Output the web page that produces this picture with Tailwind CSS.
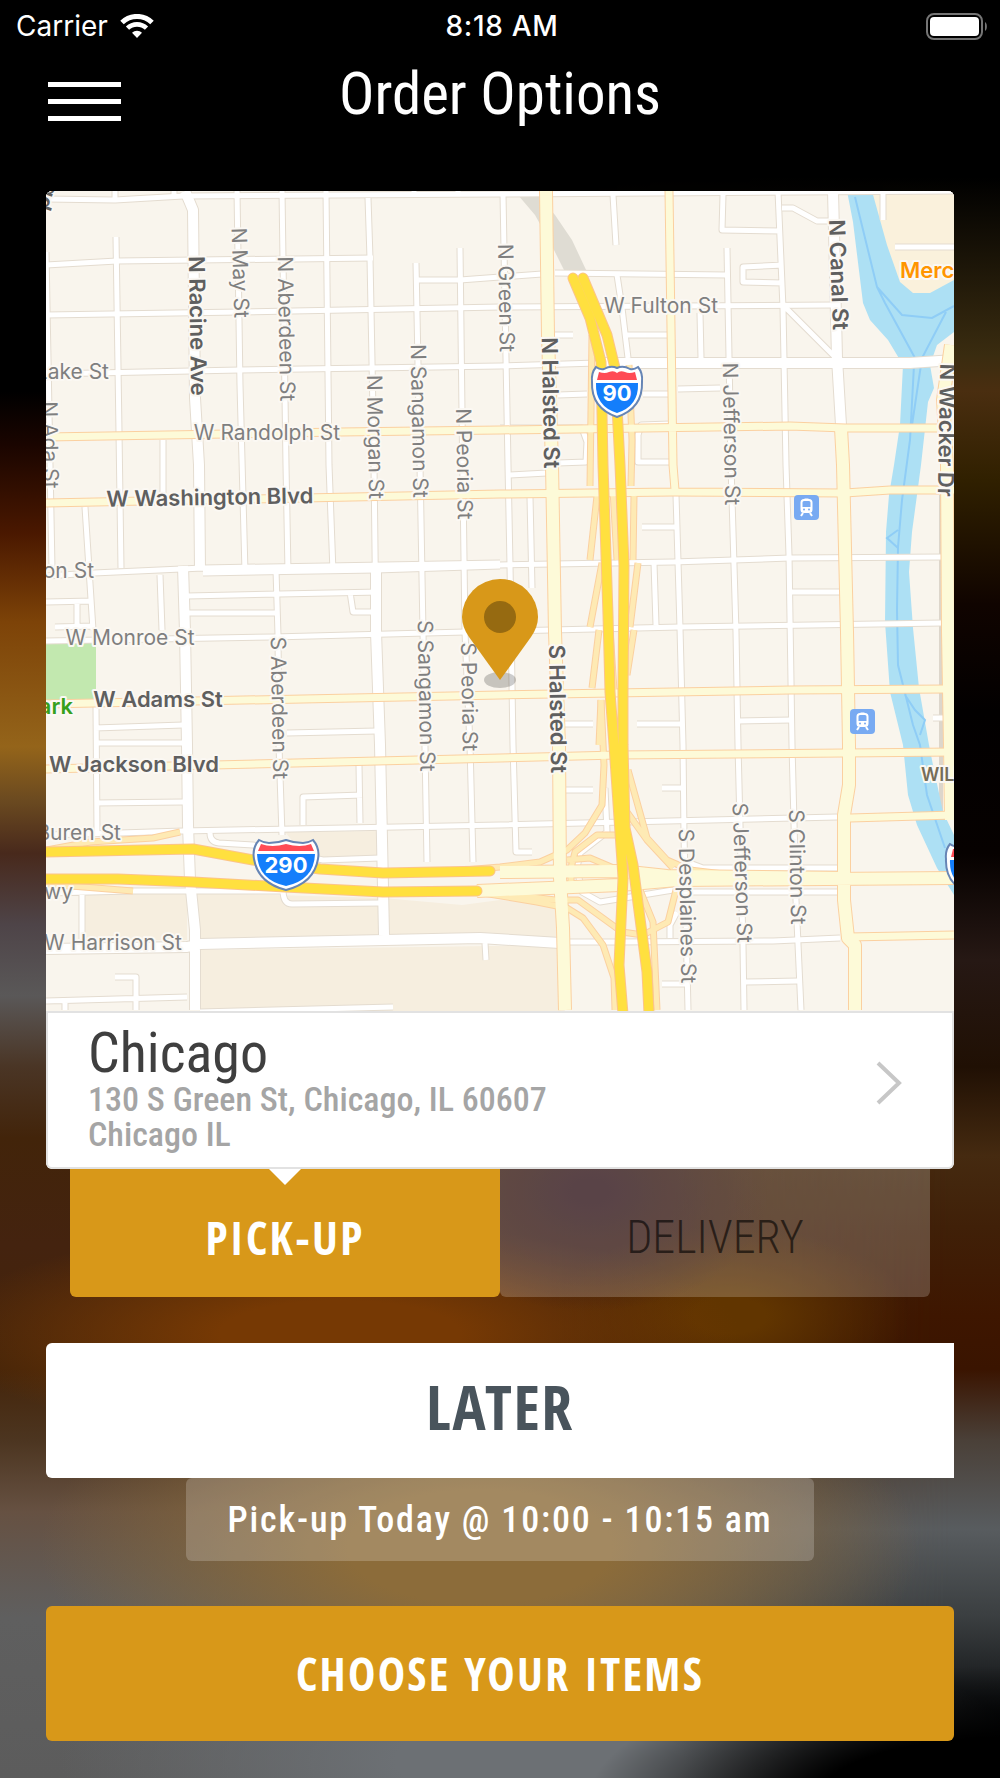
<!DOCTYPE html>
<html lang="en">
<head>
    <meta charset="UTF-8">
    <meta name="viewport" content="width=device-width, initial-scale=1.0">
    <script src="https://cdn.jsdelivr.net/npm/@tailwindcss/browser@4"></script>
    <title>Order Options</title>
</head>
<body class="bg-black">
<div class="relative isolate min-h-screen overflow-hidden font-['Roboto_Condensed','Roboto',sans-serif] text-white">

    <!-- Blurred backdrop -->
    <div class="absolute inset-0 -z-10 bg-[linear-gradient(to_bottom,#000_22%,#1a0500_25%,#4a1800_30%,#7d4308_35%,#94641a_42%,#6b4a20_45%,#48291c_48%,#4e4448_52%,#5a5858_56%,#4a3525_60%,#42240a_64%,#44230f_70%,#442409_77%,#4c3520_81%,#665142_85%,#5f5f5f_91%,#5c5c5c_100%)]"></div>
    <div class="absolute inset-0 -z-10 bg-[linear-gradient(to_bottom,#000_10%,#3a2c10_20%,#4a2e10_22%,#302000_27%,#100400_34%,#020000_40%,#060100_48%,#261814_54%,#201004_60%,#452a10_65%,#402008_69%,#3e1600_74%,#3a1400_77%,#4a4038_81%,#585c5f_86%,#3a3e40_91%,#101214_96%,#000_100%)] mask-[linear-gradient(to_right,transparent_55%,#000_95%)]"></div>
    <div class="absolute inset-0 -z-10 bg-[radial-gradient(ellipse_420px_130px_at_101%_101%,#000_45%,transparent_100%),radial-gradient(ellipse_180px_120px_at_59%_67%,#30151a_10%,transparent_100%),radial-gradient(ellipse_400px_110px_at_34%_75%,#763904_30%,transparent_100%),radial-gradient(ellipse_180px_90px_at_73%_74%,#613500_20%,transparent_100%),radial-gradient(ellipse_440px_190px_at_48%_87%,#8c6c3a_30%,transparent_100%),radial-gradient(ellipse_480px_150px_at_54%_99%,#6c7074_30%,transparent_100%)]"></div>

    <div class="grid grid-cols-3 items-center px-4 pt-3 pr-3 font-['Inter',sans-serif] text-[28px] leading-7">
        <div class="flex items-center gap-3">
            <span>Carrier</span>
            <svg class="w-[34px] h-6" viewBox="0 0 34 24" fill="none" stroke="#fff" aria-label="Wi-Fi">
                <path d="M2 8.5a21.5 21.5 0 0 1 30 0" stroke-width="5"/>
                <path d="M7.5 14.2a13.6 13.6 0 0 1 19 0" stroke-width="4.6"/>
                <path d="M17 24l-5-5.2a7.2 7.2 0 0 1 10 0z" fill="#fff" stroke="none"/>
            </svg>
        </div>
        <div class="text-center font-medium tracking-wide">8:18 AM</div>
        <svg class="ml-auto w-[62px] h-[27px]" viewBox="0 0 62 27" aria-label="Battery full">
            <rect x="1" y="1" width="55" height="25" rx="7" fill="none" stroke="#757575" stroke-width="2"/>
            <rect x="4" y="4" width="49" height="19" rx="4" fill="#fff"/>
            <path d="M59 9c2.500 1 2.500 8 0 9z" fill="#757575"/>
        </svg>
    </div>

    <header class="relative flex h-[151px] items-start justify-center pt-[18px]">
        <button type="button" aria-label="Menu" class="absolute left-12 top-[42px] flex flex-col gap-3">
            <span class="block h-[5px] w-[73px] bg-white"></span>
            <span class="block h-[5px] w-[73px] bg-white"></span>
            <span class="block h-[5px] w-[73px] bg-white"></span>
        </button>
        <h1 class="text-[59px] leading-[72px]">Order Options</h1>
    </header>

    <main class="px-[46px] pb-9">
        <section class="overflow-hidden rounded-md bg-white">
            <svg class="block h-auto w-full" viewBox="46 191 908 820" font-family="Inter, sans-serif" aria-label="Map of the West Loop, Chicago">
                <defs>
                    <g id="minor" fill="none" stroke-linejoin="round">
                        <path d="M46 199L115 200L183 196L500 194L954 191M46 265L117 261L373 258M46 315L240 312L500 307L833 305M46 374L240 370L500 366L597 363M415 280H460L542 274M555 273L727 275"/>
                        <path d="M115 191V200M174 191V197M116 237L119 432L121 568M237 191L240 385L245 572M282 191L286 465L288 572M326 191L329 465L333 572M368 198L370 258L374 465L376 632M416 263L420 465L423 632L427 862M460 248L462 412L465 632L470 745L473 862M163 440V499M46 252L50 465L52 568M414 191V196M458 191V196"/>
                        <path d="M503 194L506 358L508 465L510 565L513 745L516 852H532M613 195L616 245M723 195L722 230L782 231M778 191L783 308L786 465L789 555L792 745L796 900L801 1010M782 208H793L817 221H830M727 248L731 465L736 632L738 745L743 945L744 1010M783 265L743 267V282L783 283M617 275L622 308L628 358M627 335H667M700 313L701 358M785 307L835 357"/>
                        <path d="M676 495L680 628L683 745L684 835L688 1010M883 191V220M895 247H954M530 497L532 588M642 527H677M654 563L656 625M792 592H840M563 724H593M637 724H682M738 721L792 720M933 718H947M510 475L547 473M555 335H573M558 395L587 394M643 394H668M678 389L720 388"/>
                        <path d="M500 428H582L587 442L586 462L558 463M670 424L641 425L638 435V462H670M565 790H593M662 788H682M662 984H687M745 982L798 981M555 942H617L773 941L840 938"/>
                        <path d="M46 576L94 573L203 568L500 563M203 573L376 570L500 566M500 565L673 562L790 558L943 557M46 641L273 637L465 632L680 627L943 623M46 835L120 833L183 831L500 825L837 817"/>
                        <path d="M46 602L93 601M77 603V627M55 627L93 626M85 507L93 630M160 575L162 630M187 596L380 592M187 613H278M276 570L278 635L279 745L282 835M350 592L353 612H380M95 728L183 725M287 733L377 731M96 707L97 833M95 743H183M95 803L183 802M303 825V797L362 795M359 765L360 823"/>
                        <path d="M210 833Q210 842 219 843L253 845L323 860L380 858M283 890Q283 904 292 904L380 903M46 893L133 891H285M82 895V940M485 943L486 960M115 977H136V1010M46 1001L187 997M65 1001V1010M200 1012L393 1007"/>
                        <path d="M605 788L607 832L580 853L577 868L582 892L600 902L673 890M687 862L703 868H840M687 892H840M670 938V925L677 912"/>
                    </g>
                    <g id="wide" fill="none" stroke-linejoin="round">
                        <path d="M185 191L193 210L195 398L199 465L200 570M183 566L185 632L187 745L188 825L190 880L195 930V1010M376 565L376 632L380 745L384 935M833 191L837 358L841 425M597 363H838L910 363L954 360M46 949L187 947L200 944L480 938L560 943"/>
                    </g>
                    <g id="main" fill="none" stroke-linejoin="round">
                        <path d="M46 503L500 494L673 492L845 493L890 490H954M46 704L500 695L790 690L947 689M46 769L500 758L617 755L954 752M669 191L673 465L675 490M46 437L340 432L500 430L790 426L845 428H937M850 818L954 815M848 937L954 935"/>
                    </g>
                    <g id="arterial" fill="none" stroke-linejoin="round">
                        <path d="M546 191L548 335L552 465L555 632L559 745L560 878L563 928L565 1010"/>
                        <path d="M951 345L943 400L947 465L948 632L950 745L951 820M500 872L620 871L667 876L843 878M477 891L500 890L620 885L677 880L954 878M841 428L843 465L847 632L849 745V785L844 815V900L848 938L855 945V1010"/>
                    </g>
                    <g id="ramps" fill="none" stroke-linejoin="round">
                        <path d="M592 335L590 486M629 365L632 440L631 486M597 496L590 560M634 496L633 560M613 490L617 560M602 563L590 627M638 563L630 627M599 630L592 688M634 630L627 675M610 630L614 690M601 700L599 745"/>
                        <path d="M601 700L604 765L602 805L585 833L567 850L540 862L500 867L440 872M628 770L647 838L667 860L690 870L740 876M627 812L647 840L673 868M615 835H597L575 852L571 868V882M567 860L590 858L623 872"/>
                        <path d="M477 892L537 902L567 908L583 918L603 945L614 978L615 1010M500 893L555 900H578L622 932L643 935L668 922L676 890M638 885L653 922L657 1010M46 850L90 842L153 838L180 832M46 884L133 891"/>
                    </g>
                    <g id="freeway" fill="none" stroke-linejoin="round" stroke-linecap="round">
                        <path d="M573 278L590 318L601 362L603 465L608 615L610 692L614 745L622 862L623 878L619 965L623 1014M583 278L607 335L615 368L620 465L624 565L623 692V745L625 828L633 865L647 972L649 1014"/>
                        <path d="M40 852L193 849L253 860L320 869L383 873L490 871M40 879H118L193 882L285 887L383 892L477 891"/>
                    </g>
                    <path id="shield" d="M-21-24Q-17-21-13-22Q-6-26 0-23Q6-26 13-22Q17-21 21-24Q26-18 25-9Q26 17 0 26Q-26 17-25-9Q-26-18-21-24z"/>
                    <g id="station">
                        <rect width="25" height="25" rx="4" fill="#78aaf2"/>
                        <rect x="7.500" y="5" width="10" height="12" rx="2.500" fill="none" stroke="#fff" stroke-width="2"/>
                        <path d="M7 12h11v5H7zM10.500 3.500h4v2h-4z" fill="#fff"/>
                        <circle cx="10" cy="14.500" r="1" fill="#78aaf2"/>
                        <circle cx="15" cy="14.500" r="1" fill="#78aaf2"/>
                        <path d="M9 18l-2 3M16 18l2 3" stroke="#fff" stroke-width="2"/>
                    </g>
                </defs>

                <rect x="46" y="191" width="908" height="820" fill="#f9f5ed"/>
                <path d="M85 893L187 892V940H85zM197 893L383 898L462 905L500 900L560 905V940L200 945zM200 950L560 945L565 1011H200zM285 832L378 831V857L323 859L300 850z" fill="#f6eedf"/>
                <path d="M866 191H954V290L913 296L885 280z" fill="#faf1dc"/>
                <path d="M46 641H96V703H46z" fill="#c2e8af"/>
                <path d="M941 495V820" stroke="#ddd6cb" stroke-width="4"/>
                <path d="M518 195H538L555 215L572 240L587 272H565L550 242L535 215z" fill="#dfdcd3"/>

                <!-- River -->
                <path d="M847 191L853 222L863 303L870 320L888 340L903 365L900 425L894 465L889 495L886 532L885 622L890 692L903 745L908 795L917 825L937 868L954 895V835L943 812L933 765L929 745L919 688L913 628L909 572L912 532L917 495L921 465L928 402L934 388L930 365L937 345L954 332V280L930 293H913L900 282L887 245L872 191z" fill="#ade0f4"/>
                <path d="M855 197L877 287L885 303L915 358L914 365L910 440L902 500L898 547L897 610L898 665L908 705L913 725L920 745L927 795L945 848M877 287L902 315L932 318L954 306M946 312L922 358L912 425M898 530L887 538L898 548M905 695L915 710L925 720L920 735" fill="none" stroke="#8fcdf6" stroke-width="2"/>

                <!-- Streets: casing first, then fill -->
                <g stroke="#e4dcd0">
                    <use href="#minor" stroke-width="7"/>
                    <use href="#wide" stroke-width="12"/>
                </g>
                <g stroke="#fff">
                    <use href="#minor" stroke-width="5"/>
                    <use href="#wide" stroke-width="10"/>
                </g>
                <g stroke="#fbd0a0">
                    <use href="#ramps" stroke-width="7"/>
                    <use href="#main" stroke-width="9"/>
                    <use href="#arterial" stroke-width="14"/>
                </g>
                <use href="#ramps" stroke="#feeab4" stroke-width="5"/>
                <use href="#main" stroke="#fdfad8" stroke-width="7"/>
                <use href="#arterial" stroke="#fdfad8" stroke-width="12"/>
                <use href="#freeway" stroke="#fcc48a" stroke-width="11"/>
                <use href="#freeway" stroke="#ffe03f" stroke-width="9"/>

                <!-- Street names -->
                <g font-size="21" fill="#7f7f7f" stroke="#fbf8f3" stroke-width="4" stroke-linejoin="round" paint-order="stroke" text-anchor="middle">
                    <text transform="translate(233 273) rotate(88)">N May St</text>
                    <text transform="translate(279 329) rotate(89)">N Aberdeen St</text>
                    <text transform="translate(499 298) rotate(89)">N Green St</text>
                    <text transform="translate(724 434) rotate(89)">N Jefferson St</text>
                    <text transform="translate(368 437) rotate(89)">N Morgan St</text>
                    <text transform="translate(412 421) rotate(89)">N Sangamon St</text>
                    <text transform="translate(457 464) rotate(89)">N Peoria St</text>
                    <text transform="translate(43 445) rotate(89)">N Ada St</text>
                    <text transform="translate(272 708) rotate(89)">S Aberdeen St</text>
                    <text transform="translate(419 696) rotate(89)">S Sangamon St</text>
                    <text transform="translate(462 697) rotate(89)">S Peoria St</text>
                    <text transform="translate(680 906) rotate(89)">S Desplaines St</text>
                    <text transform="translate(735 873) rotate(88)">S Jefferson St</text>
                    <text transform="translate(790 867) rotate(89)">S Clinton St</text>
                    <text x="661" y="313">W Fulton St</text>
                    <text x="267" y="440">W Randolph St</text>
                    <text x="130" y="645">W Monroe St</text>
                    <text x="113" y="950">W Harrison St</text>
                    <g text-anchor="end">
                        <text x="109" y="379">Lake St</text>
                        <text x="94" y="578">W Madison St</text>
                        <text x="121" y="840">W Van Buren St</text>
                        <text x="73" y="899">Expwy</text>
                    </g>
                    <g fill="#5f5f5f" font-weight="600" font-size="22">
                        <text transform="translate(190 326) rotate(89)">N Racine Ave</text>
                        <text transform="translate(543 403) rotate(89)">N Halsted St</text>
                        <text transform="translate(550 709) rotate(89)">S Halsted St</text>
                        <text transform="translate(831 275) rotate(88)">N Canal St</text>
                        <text transform="translate(939 430) rotate(91)">N Wacker Dr</text>
                        <text transform="translate(43 186) rotate(110)">Ogd</text>
                        <text x="210" y="505" transform="rotate(-1 210 505)">W Washington Blvd</text>
                        <text x="158" y="707">W Adams St</text>
                        <text x="134" y="772">W Jackson Blvd</text>
                    </g>
                    <text x="73" y="714" fill="#37a01c" font-weight="600" font-size="22" text-anchor="end">Park</text>
                    <text x="900" y="278" fill="#ff9500" font-weight="600" font-size="22" text-anchor="start">Merc</text>
                    <text x="921" y="781" fill="#756d58" font-size="18" font-weight="600" text-anchor="start">WILLIS</text>
                </g>

                <!-- Interstate shields -->
                <g font-weight="700" font-size="22" fill="#fff" text-anchor="middle">
                    <g transform="translate(617 391)">
                        <use href="#shield" fill="#fff" stroke="#6685b5" stroke-width="2"/>
                        <path d="M-20-11H20L18-19Q12-17 8-19Q3-21 0-18Q-3-21-8-19Q-12-17-18-19z" fill="#ff4b55"/>
                        <path d="M-21-8H21Q22 15 0 22Q-22 15-21-8z" fill="#147efb"/>
                        <text y="10">90</text>
                    </g>
                    <g transform="translate(286 864)">
                        <path d="M-27-24Q-22-21-17-21Q-8-21 0-24Q8-21 17-21Q22-21 27-24Q34-16 32-5Q28 19 0 26Q-28 19-32-5Q-34-16-27-24z" fill="#fff" stroke="#6685b5" stroke-width="2"/>
                        <path d="M-28-13H28L25-20Q14-16 0-20Q-14-16-25-20z" fill="#ff4b55"/>
                        <path d="M-29-10H29Q28 16 0 22Q-28 16-29-10z" fill="#147efb"/>
                        <text y="9">290</text>
                    </g>
                    <g transform="translate(971 868)">
                        <use href="#shield" fill="#fff" stroke="#6685b5" stroke-width="2"/>
                        <path d="M-20-11H20L18-19H-18z" fill="#ff4b55"/>
                        <path d="M-21-8H21Q22 15 0 22Q-22 15-21-8z" fill="#147efb"/>
                    </g>
                </g>

                <use href="#station" x="794" y="495"/>
                <use href="#station" x="850" y="709"/>

                <!-- Restaurant pin -->
                <ellipse cx="500" cy="680" rx="16" ry="8" fill="#000" fill-opacity=".2"/>
                <path d="M500 680L469 637Q462 627 462 617a38 38 0 0 1 76 0Q538 627 531 637z" fill="#d89819"/>
                <circle cx="500" cy="617" r="16" fill="#966a11"/>
            </svg>

            <a href="#" class="flex items-start justify-between rounded-b-md border-2 border-[#e2e2e2] pt-3 pb-[15px] pl-10 pr-[50px]">
                <span class="block">
                    <span class="block text-[56px] leading-[57px] text-[#3f3f3f]">Chicago</span>
                    <span class="block text-[34px] font-medium leading-[35px] text-[#a5a5a5]">130 S Green St, Chicago, IL 60607<br>Chicago IL</span>
                </span>
                <svg class="mt-9 h-11 w-[26px]" viewBox="0 0 26 44" fill="none" stroke="#c7c7c7" stroke-width="4">
                    <path d="M2 2l21 20L2 42"/>
                </svg>
            </a>
        </section>

        <div class="mx-6 grid grid-cols-2">
            <button type="button" aria-pressed="true" class="relative h-32 rounded-b-md bg-[#d89819] pt-2 font-['Open_Sans_Condensed','Roboto_Condensed',sans-serif] text-[46px] font-bold tracking-wider">
                <svg class="absolute left-1/2 top-0 -ml-4 h-4 w-8" viewBox="0 0 32 16" fill="#fff"><path d="M0 0h32L16 16z"/></svg>
                PICK-UP
            </button>
            <button type="button" aria-pressed="false" class="h-32 rounded-b-md bg-white/20 pt-2 text-[46px] font-light text-black/60">DELIVERY</button>
        </div>

        <button type="button" class="mt-[46px] block h-[135px] w-full rounded-l-md bg-white pb-2 font-['Open_Sans_Condensed','Roboto_Condensed',sans-serif] text-[62px] font-bold tracking-wide text-[#49545c]">LATER</button>
        <p class="mx-[140px] flex h-[83px] items-center justify-center rounded-md bg-white/20 text-[36px] font-medium tracking-wider">Pick-up Today @ 10:00 - 10:15 am</p>
        <button type="button" class="mt-[45px] block h-[135px] w-full rounded-md bg-[#d89819] font-['Open_Sans_Condensed','Roboto_Condensed',sans-serif] text-[46px] font-bold tracking-wider">CHOOSE YOUR ITEMS</button>
    </main>
</div>
</body>
</html>
